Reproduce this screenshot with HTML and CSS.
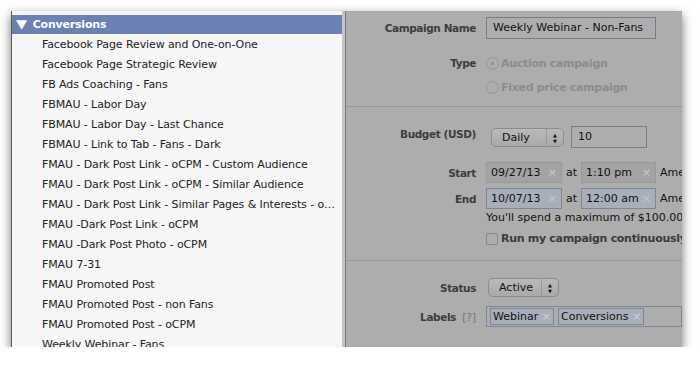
FILE: index.html
```html
<!DOCTYPE html>
<html lang="en">
<head>
    <meta charset="UTF-8">
    <title>Campaign Settings</title>
    <link rel="stylesheet" href="styles.css">
</head>
<body>
    <div class="window">
        <!-- Campaign list -->
        <div class="list-pane">
            <div class="group-header"><span class="arrow">&#9660;</span> Conversions</div>
            <ul class="campaigns">
                <li>Facebook Page Review and One-on-One</li>
                <li>Facebook Page Strategic Review</li>
                <li>FB Ads Coaching - Fans</li>
                <li>FBMAU - Labor Day</li>
                <li>FBMAU - Labor Day - Last Chance</li>
                <li>FBMAU - Link to Tab - Fans - Dark</li>
                <li>FMAU - Dark Post Link - oCPM - Custom Audience</li>
                <li>FMAU - Dark Post Link - oCPM - Similar Audience</li>
                <li>FMAU - Dark Post Link - Similar Pages &amp; Interests - oCPM</li>
                <li>FMAU -Dark Post Link - oCPM</li>
                <li>FMAU -Dark Post Photo - oCPM</li>
                <li>FMAU 7-31</li>
                <li>FMAU Promoted Post</li>
                <li>FMAU Promoted Post - non Fans</li>
                <li>FMAU Promoted Post - oCPM</li>
                <li>Weekly Webinar - Fans</li>
            </ul>
        </div>

        <div class="divider"></div>

        <!-- Campaign form (dimmed) -->
        <div class="form-pane">
            <div class="section section-name">
                <div class="row">
                    <div class="label">Campaign Name</div>
                    <div class="control"><div class="text-input name-input">Weekly Webinar - Non-Fans</div><span class="extra">(</span></div>
                </div>
                <div class="row row-type">
                    <div class="label">Type</div>
                    <div class="control radios">
                        <div class="radio-line"><span class="radio checked"></span>Auction campaign</div>
                        <div class="radio-line"><span class="radio"></span>Fixed price campaign</div>
                    </div>
                </div>
            </div>

            <div class="section section-budget">
                <div class="row row-budget">
                    <div class="label">Budget (USD)</div>
                    <div class="control">
                        <div class="select budget-select">Daily<span class="arrows">&#9650;<br>&#9660;</span></div>
                        <div class="text-input budget-input">10</div>
                    </div>
                </div>
                <div class="row row-date">
                    <div class="label">Start</div>
                    <div class="control">
                        <span class="chip date-chip">09/27/13 <b>&#215;</b></span>
                        <span class="at">at</span>
                        <span class="chip time-chip">1:10 pm <b>&#215;</b></span>
                        <span class="zone">America/Los_Angeles</span>
                    </div>
                </div>
                <div class="row row-date row-end">
                    <div class="label">End</div>
                    <div class="control">
                        <span class="chip date-chip active">10/07/13 <b>&#215;</b></span>
                        <span class="at">at</span>
                        <span class="chip time-chip active">12:00 am <b>&#215;</b></span>
                        <span class="zone">America/Los_Angeles</span>
                    </div>
                </div>
                <div class="row">
                    <div class="label"></div>
                    <div class="control spend">You'll spend a maximum of $100.00 total.</div>
                </div>
                <div class="row">
                    <div class="label"></div>
                    <div class="control check-line"><span class="checkbox"></span>Run my campaign continuously starting today</div>
                </div>
            </div>

            <div class="section section-status">
                <div class="row">
                    <div class="label">Status</div>
                    <div class="control">
                        <div class="select status-select">Active<span class="arrows">&#9650;<br>&#9660;</span></div>
                    </div>
                </div>
                <div class="row row-labels">
                    <div class="label">Labels <span class="help">[?]</span></div>
                    <div class="control">
                        <div class="labels-box">
                            <span class="tag">Webinar <b>&#215;</b></span>
                            <span class="tag">Conversions <b>&#215;</b></span>
                        </div>
                    </div>
                </div>
            </div>
        </div>
    </div>
</body>
</html>
```

FILE: styles.css
```css
/* Page */
body {
    margin: 0;
    background: #fff;
    font-family: 'DejaVu Sans', sans-serif;
    font-size: 11px;
    color: #222;
}

/* Window with mac style shadow */
.window {
    display: flex;
    width: 671px;
    height: 336px;
    margin: 11px 0 0 11px;
    overflow: hidden;
    box-shadow: 0 4px 10px rgba(0, 0, 0, 0.55);
}

/* Left list */
.list-pane {
    width: 330px;
    flex-shrink: 0;
    background: #f6f6f6;
    border-left: 1px solid #5a5a5a;
    padding-top: 4px;
    overflow: hidden;
}

.group-header {
    height: 19px;
    line-height: 19px;
    background: #6b80b3;
    color: #fff;
    font-weight: bold;
    font-size: 11px;
    letter-spacing: -0.2px;
    padding-left: 5px;
}

.arrow {
    display: inline-block;
    font-size: 12px;
    transform: scaleX(1.2);
    margin-right: 3px;
}

.campaigns {
    list-style: none;
    margin: 0;
    padding: 0;
}

.campaigns li {
    height: 20px;
    line-height: 21px;
    padding: 0 4px 0 30px;
    white-space: nowrap;
    overflow: hidden;
    text-overflow: ellipsis;
    letter-spacing: -0.1px;
}

/* Splitter */
.divider {
    width: 3px;
    flex-shrink: 0;
    background: #c4c4c4;
    border-right: 1px solid #777;
}

.form-pane {
    flex: 1;
    background: #adadad;
    overflow: hidden;
    color: #3a3a3a;
}

.section {
    border-bottom: 1px solid #989898;
}

.section-name {
    padding: 6px 0 7px;
}

.section-budget {
    padding: 19px 0 14px;
}

.section-status {
    border-bottom: none;
    padding: 17px 0 0;
}

.row {
    display: grid;
    grid-template-columns: 130px 1fr;
    column-gap: 10px;
    align-items: center;
    white-space: nowrap;
}

.label {
    text-align: right;
    font-weight: bold;
    font-size: 10.5px;
    letter-spacing: -0.4px;
    color: #3d3d3d;
}

.control {
    display: flex;
    align-items: center;
}

.text-input {
    height: 20px;
    line-height: 20px;
    border: 1px solid #767d8c;
    padding: 0 6px;
    color: #111;
    font-size: 11px;
}

.name-input {
    width: 156px;
}

.extra {
    margin-left: 25px;
    color: #4a5a80;
}

/* Type radios */
.row-type {
    align-items: start;
    margin-top: 12px;
}

.row-type .label {
    line-height: 24px;
}

.radios {
    flex-direction: column;
    align-items: flex-start;
}

.radio-line {
    display: flex;
    align-items: center;
    height: 24px;
    font-weight: bold;
    letter-spacing: -0.3px;
    color: #8c8c8c;
}

.radio {
    width: 11px;
    height: 11px;
    border: 1px solid #959595;
    border-radius: 50%;
    margin-right: 2px;
    position: relative;
}

.radio.checked::after {
    content: '';
    position: absolute;
    left: 4px;
    top: 4px;
    width: 3px;
    height: 3px;
    border-radius: 50%;
    background: #8a8a8a;
}

/* Selects */
.select {
    display: flex;
    align-items: center;
    height: 19px;
    border: 1px solid #8c8c8c;
    border-radius: 5px;
    background: linear-gradient(#bababa, #a9a9a9);
    color: #111;
    font-size: 11px;
    padding-left: 10px;
    box-sizing: border-box;
}

.arrows {
    margin-left: auto;
    width: 17px;
    height: 100%;
    border-left: 1px solid #999;
    font-size: 5px;
    line-height: 6px;
    text-align: center;
    padding-top: 3px;
    box-sizing: border-box;
}

.row-budget {
    align-items: start;
}

.row-budget .label {
    padding-top: 2px;
}

.budget-select {
    width: 73px;
    margin: 1px 0 0 5px;
}

.budget-input {
    width: 62px;
    margin-left: 7px;
}

/* Start / end date chips */
.row-date {
    margin-top: 14px;
}

.row-end {
    margin-top: 5px;
}

.chip {
    height: 19px;
    line-height: 19px;
    border: 1px solid #999;
    background: #a3a3a3;
    padding: 0 4px;
    color: #111;
    font-size: 11px;
    display: flex;
    justify-content: space-between;
    box-sizing: content-box;
}

.chip.active {
    background: #a9aebb;
    border-color: #7f8698;
}

.chip b {
    color: #c4c4c4;
}

.date-chip {
    width: 66px;
}

.time-chip {
    width: 65px;
}

.at {
    margin: 0 4px;
    color: #111;
}

.zone {
    margin-left: 4px;
    color: #111;
}

.spend {
    margin-top: 2px;
    line-height: 14px;
    color: #111;
}

.check-line {
    margin-top: 7px;
    line-height: 14px;
    font-weight: bold;
    letter-spacing: -0.3px;
    color: #3a3a3a;
}

.checkbox {
    width: 10px;
    height: 10px;
    border: 1px solid #888;
    border-radius: 2px;
    margin-right: 3px;
}

/* Status / labels */
.status-select {
    width: 71px;
    margin-left: 2px;
}

.row-labels {
    margin-top: 9px;
}

.help {
    font-weight: normal;
    color: #777;
    margin-left: 3px;
    letter-spacing: 0;
}

.labels-box {
    flex: 1;
    height: 19px;
    border: 1px solid #7e8698;
    padding: 0 3px;
    display: flex;
    align-items: center;
    gap: 4px;
}

.tag {
    height: 15px;
    line-height: 15px;
    border: 1px solid #7e8698;
    background: #a9aebb;
    padding: 0 2px;
    color: #111;
    font-size: 11px;
}

.tag b {
    color: #c4c8d2;
}
```
